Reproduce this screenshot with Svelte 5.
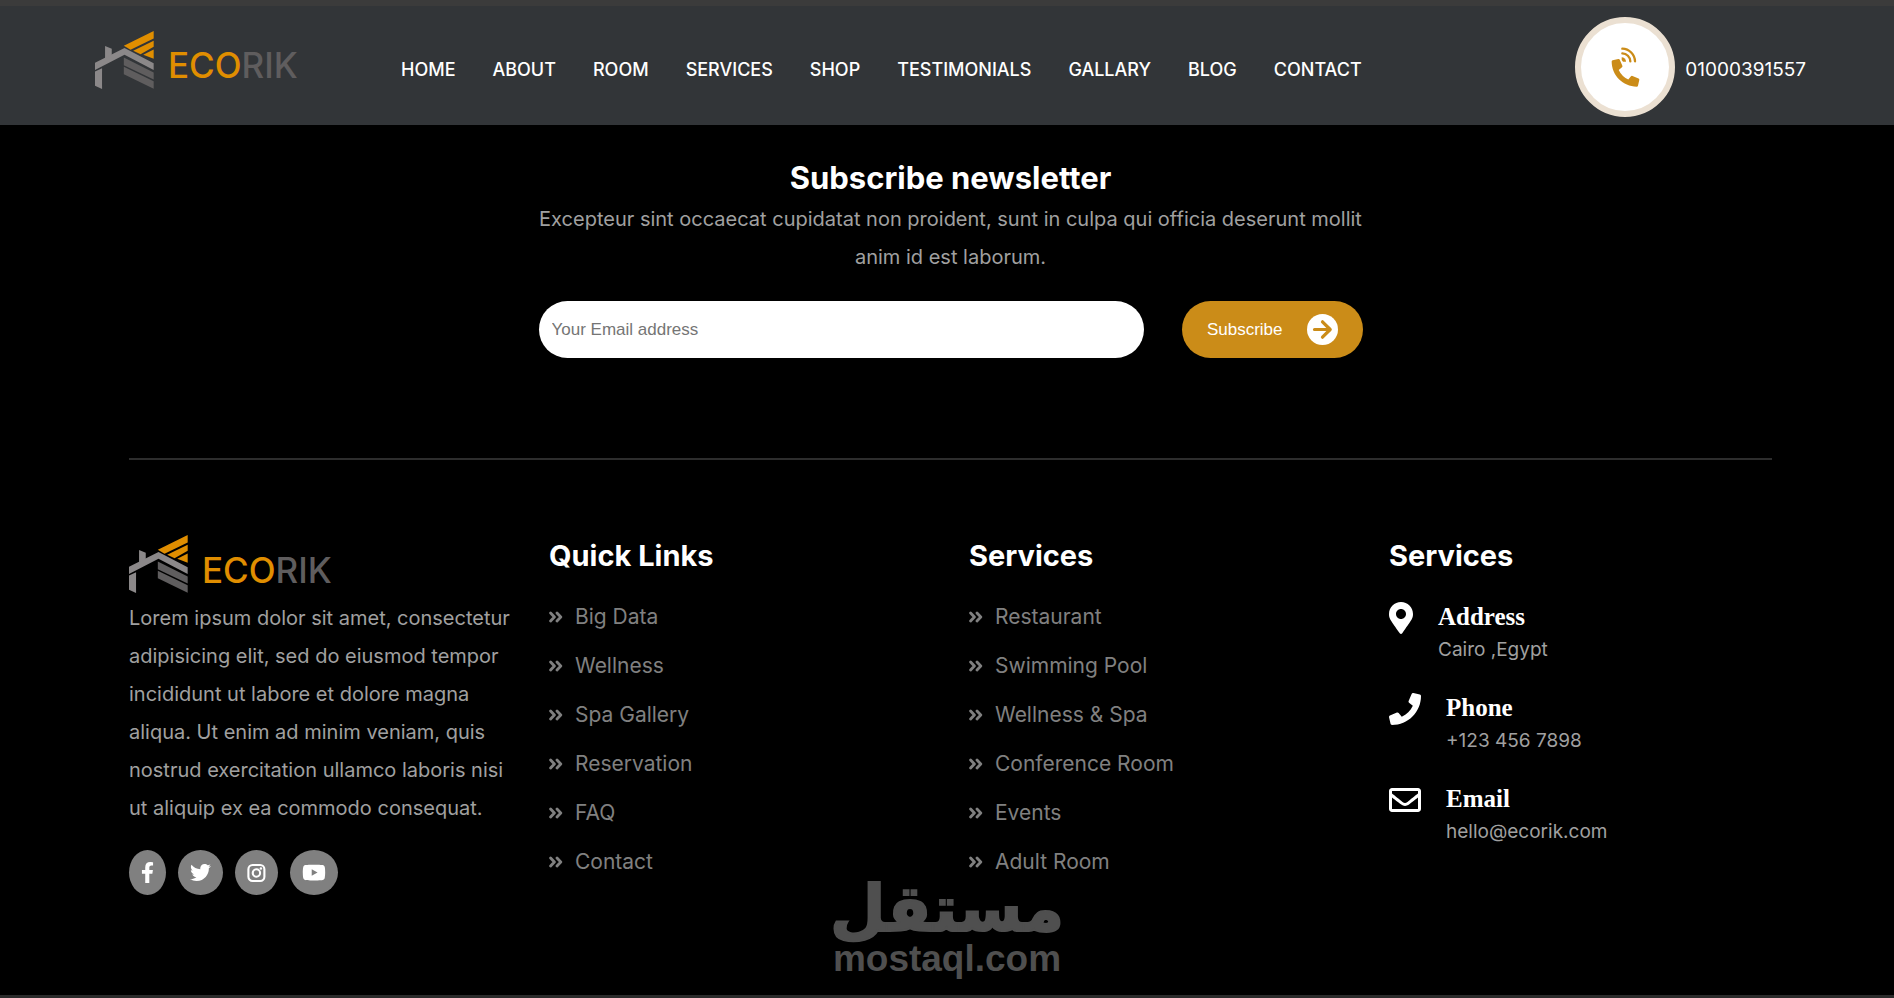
<script>
  const nav = ['Home', 'About', 'Room', 'Services', 'Shop', 'Testimonials', 'Gallary', 'Blog', 'Contact'];

  const lists = [
    { title: 'Quick Links', items: ['Big Data', 'Wellness', 'Spa Gallery', 'Reservation', 'FAQ', 'Contact'] },
    { title: 'Services', items: ['Restaurant', 'Swimming Pool', 'Wellness & Spa', 'Conference Room', 'Events', 'Adult Room'] }
  ];

  const contacts = [
    {
      title: 'Address',
      text: 'Cairo ,Egypt',
      width: 24,
      box: '0 0 384 512',
      path: 'M172.268 501.67C26.97 291.031 0 269.413 0 192 0 85.961 85.961 0 192 0s192 85.961 192 192c0 77.413-26.97 99.031-172.268 309.67-9.535 13.774-29.93 13.773-39.464 0zM192 272c44.183 0 80-35.817 80-80s-35.817-80-80-80-80 35.817-80 80 35.817 80 80 80z'
    },
    {
      title: 'Phone',
      text: '+123 456 7898',
      width: 32,
      box: '0 0 512 512',
      path: 'M493.4 24.6l-104-24c-11.3-2.6-22.9 3.3-27.5 13.9l-48 112c-4.2 9.8-1.4 21.3 6.9 28l60.6 49.6c-36 76.7-98.9 140.5-177.2 177.2l-49.6-60.6c-6.8-8.3-18.2-11.1-28-6.9l-112 48C3.9 366.5-2 378.1.6 389.4l24 104C27.1 504.2 36.7 512 48 512c256.1 0 464-207.5 464-464 0-11.2-7.7-20.9-18.6-23.4z'
    },
    {
      title: 'Email',
      text: 'hello@ecorik.com',
      width: 32,
      box: '0 0 512 512',
      path: 'M464 64H48C21.49 64 0 85.49 0 112v288c0 26.51 21.49 48 48 48h416c26.51 0 48-21.49 48-48V112c0-26.51-21.49-48-48-48zm0 48v40.805c-22.422 18.259-58.168 46.651-134.587 106.49-16.841 13.247-50.201 45.072-73.413 44.701-23.208.375-56.579-31.459-73.413-44.701C106.18 199.465 70.425 171.067 48 152.805V112h416zM48 400V214.398c22.914 18.251 55.409 43.862 104.938 82.646 21.857 17.205 60.134 55.186 103.062 54.955 42.717.231 80.509-37.199 103.053-54.947 49.528-38.783 82.032-64.401 104.947-82.653V400H48z'
    }
  ];
</script>

{#snippet logo()}
  <a class="logo" href="#home">
    <svg width="59" height="58" viewBox="0 0 176 173" aria-hidden="true">
      <g fill="#e08e00">
        <path d="M86 44 175 0v22L106 56z" />
        <path d="M114 59 175 29v18l-39 22z" />
        <path d="M144 71 175 55v28z" />
      </g>
      <g fill="#8b8889">
        <path d="M30 45l20 8v19l-20 11z" />
        <path d="M0 95 88 51l87 45v20L88 71 0 116z" />
        <path d="M0 121l21-10v62L0 163z" />
      </g>
      <g fill="#5f5d5e">
        <path d="M86 79l89 45v21L86 102z" />
        <path d="M86 107l89 43v22L86 129z" />
      </g>
    </svg>
    <span class="wordmark"><span>ECO</span>RIK</span>
  </a>
{/snippet}

<div class="page">
  <header>
    {@render logo()}
    <nav>
      {#each nav as item}
        <a href="#{item.toLowerCase()}">{item}</a>
      {/each}
    </nav>
    <a class="call" href="tel:01000391557">
      <span class="disc">
        <svg width="29" height="40" viewBox="0 0 87 120" aria-hidden="true">
          <g fill="#cb8c18">
            <path transform="translate(2 36) scale(.162)" d="M497.39 361.8l-112-48a24 24 0 0 0-28 6.9l-49.6 60.6A370.66 370.66 0 0 1 130.6 204.11l60.6-49.6a23.94 23.94 0 0 0 6.9-28l-48-112A24.16 24.16 0 0 0 122.6.61l-104 24A24 24 0 0 0 0 48c0 256.5 207.9 464 464 464a24 24 0 0 0 23.4-18.6l24-104a24.29 24.29 0 0 0-14.01-27.6z" />
            <path d="M32 31a13 13 0 0 1 13 13h-9l-4-5z" />
          </g>
          <g fill="none" stroke="#cb8c18" stroke-width="7" stroke-linecap="round">
            <path d="M34 19a25 25 0 0 1 24 24" />
            <path d="M34 5a39 39 0 0 1 38 38" />
          </g>
        </svg>
      </span>
      <span class="number">01000391557</span>
    </a>
  </header>

  <main>
    <section class="newsletter">
      <h2>Subscribe newsletter</h2>
      <p>Excepteur sint occaecat cupidatat non proident, sunt in culpa qui officia deserunt mollit anim id est laborum.</p>
      <form onsubmit={(e) => e.preventDefault()}>
        <input type="email" placeholder="Your Email address" aria-label="Your Email address" />
        <button type="submit">
          Subscribe
          <svg width="31" height="31" viewBox="0 0 31 31" aria-hidden="true">
            <circle cx="15.5" cy="15.5" r="15.5" fill="#fff" />
            <path d="M7.5 15.5h15M15.5 7.8l7.7 7.7-7.7 7.7" fill="none" stroke="#cb8c18" stroke-width="3.2" stroke-linecap="round" stroke-linejoin="round" />
          </svg>
        </button>
      </form>
    </section>

    <footer>
      <section class="about">
        {@render logo()}
        <p>Lorem ipsum dolor sit amet, consectetur adipisicing elit, sed do eiusmod tempor incididunt ut labore et dolore magna aliqua. Ut enim ad minim veniam, quis nostrud exercitation ullamco laboris nisi ut aliquip ex ea commodo consequat.</p>
        <div class="social">
          <a href="#facebook" aria-label="Facebook">
            <svg width="13" height="21" viewBox="0 0 320 512"><path fill="#fff" d="M279.14 288l14.22-92.66h-88.91v-60.13c0-25.35 12.42-50.06 52.24-50.06h40.42V6.26S260.43 0 225.36 0c-73.22 0-121.08 44.38-121.08 124.72v70.62H22.89V288h81.39v224h100.17V288z" /></svg>
          </a>
          <a href="#twitter" aria-label="Twitter">
            <svg width="21" height="21" viewBox="0 0 512 512"><path fill="#fff" d="M459.37 151.716c.325 4.548.325 9.097.325 13.645 0 138.72-105.583 298.558-298.558 298.558-59.452 0-114.68-17.219-161.137-47.106 8.447.974 16.568 1.299 25.34 1.299 49.055 0 94.213-16.568 130.274-44.832-46.132-.975-84.792-31.188-98.112-72.772 6.498.974 12.995 1.624 19.818 1.624 9.421 0 18.843-1.3 27.614-3.573-48.081-9.747-84.143-51.98-84.143-102.985v-1.299c13.969 7.797 30.214 12.67 47.431 13.319-28.264-18.843-46.781-51.005-46.781-87.391 0-19.492 5.197-37.36 14.294-52.954 51.655 63.675 129.3 105.258 216.365 109.807-1.624-7.797-2.599-15.918-2.599-24.04 0-57.828 46.782-104.934 104.934-104.934 30.213 0 57.502 12.67 76.67 33.137 23.715-4.548 46.456-13.32 66.599-25.34-7.798 24.366-24.366 44.833-46.132 57.827 21.117-2.273 41.584-8.122 60.426-16.243-14.292 20.791-32.161 39.308-52.628 54.253z" /></svg>
          </a>
          <a href="#instagram" aria-label="Instagram">
            <svg width="19" height="20" viewBox="0 0 19 20">
              <g fill="none" stroke="#fff" stroke-width="2.1">
                <rect x="1.4" y="2" width="16" height="16" rx="4.2" />
                <circle cx="9.4" cy="10" r="3.7" />
              </g>
              <circle cx="13.9" cy="5.5" r="1.2" fill="#fff" />
            </svg>
          </a>
          <a href="#youtube" aria-label="YouTube">
            <svg width="24" height="21" viewBox="0 0 576 512"><path fill="#fff" d="M549.655 124.083c-6.281-23.65-24.787-42.276-48.284-48.597C458.781 64 288 64 288 64S117.22 64 74.629 75.486c-23.497 6.322-42.003 24.947-48.284 48.597-11.412 42.867-11.412 132.305-11.412 132.305s0 89.438 11.412 132.305c6.281 23.65 24.787 41.5 48.284 47.821C117.22 448 288 448 288 448s170.78 0 213.371-11.486c23.497-6.321 42.003-24.171 48.284-47.821 11.412-42.867 11.412-132.305 11.412-132.305s0-89.438-11.412-132.305zm-317.51 213.508V175.185l142.739 81.205-142.739 81.201z" /></svg>
          </a>
        </div>
      </section>

      {#each lists as list}
        <section>
          <h3>{list.title}</h3>
          <ul>
            {#each list.items as item}
              <li>
                <a href="#link">
                  <svg width="14" height="12" viewBox="0 0 14 12" aria-hidden="true">
                    <path d="M1.6 2 5.4 6 1.6 10M8 2 11.8 6 8 10" fill="none" stroke="#808080" stroke-width="2.8" stroke-linecap="round" stroke-linejoin="round" />
                  </svg>
                  {item}
                </a>
              </li>
            {/each}
          </ul>
        </section>
      {/each}

      <section>
        <h3>Services</h3>
        <div class="contacts">
          {#each contacts as c}
            <div class="contact">
              <svg width={c.width} height="32" viewBox={c.box} aria-hidden="true"><path fill="#fff" d={c.path} /></svg>
              <div>
                <h4>{c.title}</h4>
                <span>{c.text}</span>
              </div>
            </div>
          {/each}
        </div>
      </section>
    </footer>
  </main>

  <div class="watermark">
    <span class="arabic" lang="ar" dir="rtl">مستقل</span>
    <span class="latin">mostaql.com</span>
  </div>
</div>

<style>
  :global(body) {
    margin: 0;
    background: #000;
  }
  * {
    box-sizing: border-box;
  }
  h2, h3, h4, p, ul {
    margin: 0;
    padding: 0;
  }
  a {
    color: inherit;
    text-decoration: none;
  }
  svg {
    display: block;
    flex: none;
  }
  .page {
    position: relative;
    display: flex;
    flex-direction: column;
    min-height: 100vh;
    background: #000;
    color: #fff;
    border-bottom: 3px solid #2b2b2b;
    font-family: Inter, sans-serif;
  }
  header {
    display: flex;
    align-items: center;
    height: 125px;
    padding: 0 88px 0 95px;
    background: #323538;
    border-top: 6px solid #3b3b3b;
  }
  .logo {
    display: flex;
    align-items: center;
    gap: 14px;
    width: 202px;
    flex: none;
  }
  header .logo {
    margin-bottom: 12px;
  }
  .wordmark {
    padding-top: 11px;
    font-size: 35px;
    font-weight: 500;
    line-height: 42px;
    color: #5f5d5e;
  }
  .wordmark span {
    color: #e08e00;
  }
  nav {
    display: flex;
    gap: 37px;
    margin: 8px auto 0 104px;
    font-size: 18px;
    font-weight: 500;
    line-height: 28px;
    text-transform: uppercase;
  }
  .call {
    display: flex;
    align-items: center;
    gap: 10px;
    margin-top: 2px;
    font-size: 19px;
    white-space: nowrap;
  }
  .number {
    padding-top: 5px;
  }
  .disc {
    display: flex;
    align-items: center;
    justify-content: center;
    width: 100px;
    height: 100px;
    border: 6px solid #ebe0d2;
    border-radius: 50%;
    background: #fff;
  }
  main {
    padding: 30px 122px 0 129px;
  }
  .newsletter {
    max-width: 824px;
    margin: 0 auto;
    padding-bottom: 100px;
    text-align: center;
  }
  h2 {
    font-size: 31px;
    font-weight: 700;
    line-height: 45px;
  }
  p {
    color: #a0a0a0;
    font-size: 20px;
    line-height: 38px;
  }
  form {
    display: flex;
    gap: 38px;
    margin-top: 25px;
  }
  input {
    flex: 1;
    min-width: 0;
    height: 57px;
    padding: 0 13px;
    border: 0;
    border-radius: 29px;
    background: #fff;
    font: 17px "Liberation Sans", sans-serif;
  }
  input::placeholder {
    color: #757575;
  }
  button {
    display: flex;
    align-items: center;
    gap: 24px;
    height: 57px;
    padding: 0 25px;
    border: 0;
    border-radius: 29px;
    background: #cb8c18;
    color: #fff;
    font: 17px "Liberation Sans", sans-serif;
  }
  footer {
    display: grid;
    grid-template-columns: repeat(4, minmax(0, 1fr));
    gap: 37px;
    padding-top: 75px;
    border-top: 2px solid #2d2d2d;
  }
  .about p {
    margin-top: 6px;
  }
  .social {
    display: flex;
    gap: 12px;
    margin-top: 23px;
  }
  .social a {
    display: flex;
    align-items: center;
    height: 45px;
    padding: 0 12px;
    border-radius: 50%;
    background: #808080;
  }
  h3 {
    font-size: 29px;
    font-weight: 700;
    line-height: 42px;
  }
  ul {
    display: flex;
    flex-direction: column;
    gap: 19px;
    margin-top: 25px;
    list-style: none;
  }
  li a {
    display: flex;
    align-items: center;
    gap: 12px;
    color: #808080;
    font-size: 21px;
    line-height: 30px;
  }
  .contacts {
    display: flex;
    flex-direction: column;
    gap: 28px;
    margin-top: 25px;
  }
  .contact {
    display: flex;
    gap: 25px;
  }
  h4 {
    font: 700 25px/30px "Liberation Serif", serif;
  }
  .contact span {
    display: block;
    margin-top: 3px;
    color: #a0a0a0;
    font-size: 19px;
    line-height: 30px;
  }
  .watermark {
    position: absolute;
    left: 50%;
    bottom: 15px;
    display: flex;
    flex-direction: column;
    align-items: center;
    transform: translateX(-50%);
    color: #4f4f4f;
    font-weight: 700;
  }
  .arabic {
    font-family: "DejaVu Sans", sans-serif;
    font-size: 64px;
    line-height: 58px;
    -webkit-text-stroke: 2px #4f4f4f;
  }
  .latin {
    font-family: "Liberation Sans", sans-serif;
    font-size: 37px;
    line-height: 42px;
  }
</style>
